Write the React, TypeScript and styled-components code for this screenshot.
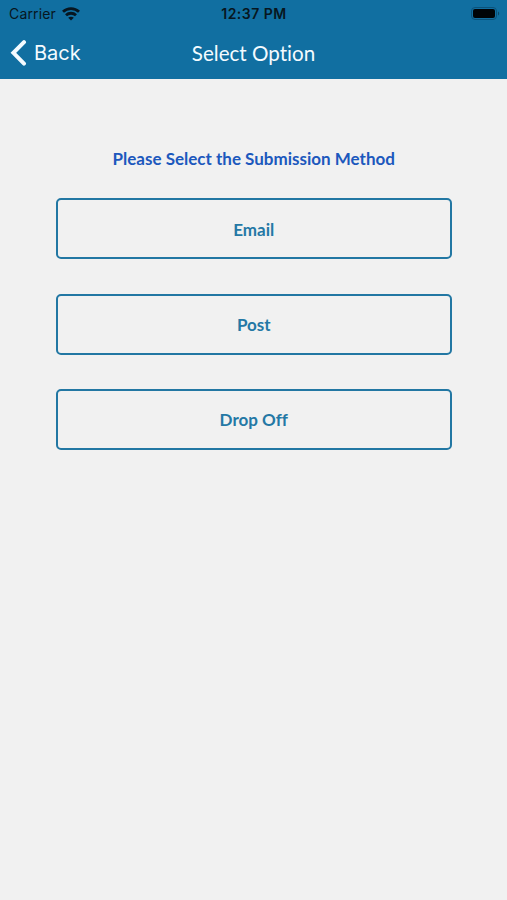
import React from "react"
import styled, { createGlobalStyle } from "styled-components"

const GlobalStyle = createGlobalStyle`
    * {
        box-sizing: border-box;
    }
    body {
        margin: 0;
        background: #f1f1f1;
    }
    button {
        border: none;
        background: none;
        padding: 0;
        cursor: pointer;
    }
`

const Screen = styled.div`
    min-height: 100vh;
    background: #f1f1f1;
    font-family: Lato, sans-serif;
    font-variant-ligatures: none;
`

const Header = styled.header`
    height: 79px;
    background: #116fa1;
`

const StatusBar = styled.div`
    height: 27px;
    display: grid;
    grid-template-columns: 1fr auto 1fr;
    align-items: center;
    padding: 0 7px 0 9px;
    font-family: Inter, sans-serif;
    font-size: 14px;
    line-height: 27px;
    color: #071620;
    .carrier {
        display: flex;
        align-items: center;
        gap: 6px;
        letter-spacing: 0.15px;
    }
    .time {
        margin-right: 1px;
        font-weight: 600;
        letter-spacing: 0.5px;
    }
    .battery {
        display: flex;
        justify-content: flex-end;
    }
    svg {
        display: block;
    }
`

const NavBar = styled.nav`
    height: 52px;
    display: grid;
    grid-template-columns: 1fr auto 1fr;
    align-items: center;
    padding: 0 10px;
    color: #f4fbff;
`

const BackButton = styled.button`
    display: flex;
    align-items: center;
    gap: 7px;
    justify-self: start;
    font-family: Inter, sans-serif;
    font-size: 20px;
    line-height: 52px;
    color: inherit;
`

const Title = styled.h1`
    margin: 0;
    font-size: 20.6px;
    font-weight: 400;
    line-height: 52px;
`

const Content = styled.main`
    padding: 69px 55.5px 0 56px;
`

const Prompt = styled.h2`
    margin: 0 0 28.4px;
    font-size: 17px;
    font-weight: 700;
    line-height: 22px;
    text-align: center;
    color: #1c58bd;
`

const OptionList = styled.div`
    display: flex;
    flex-direction: column;
    gap: 34.2px;
`

const OptionButton = styled.button`
    && {
        height: 61px;
        padding-top: 1px;
        border: 2px solid #2277a3;
        border-radius: 5px;
        font-family: Lato, sans-serif;
        font-size: 17px;
        font-weight: 700;
        font-variant-ligatures: none;
        color: #2478a5;
    }
`

const WifiIcon = () => (
    <svg width="18" height="14" viewBox="0 0 18 14" fill="none" stroke="currentColor" strokeWidth="2.8">
        <path d="M1 4.8C5.4.6 12.6.6 17 4.8" />
        <path d="M4 8.2c2.8-2.6 7.2-2.6 10 0" />
        <path d="M9 13.6L6.2 10.8c1.5-1.3 4.1-1.3 5.6 0z" fill="currentColor" stroke="none" />
    </svg>
)

const BatteryIcon = () => (
    <svg width="29" height="13" viewBox="0 0 29 13">
        <rect x="0.5" y="0.5" width="25" height="12" rx="3.5" fill="none" stroke="#0b527a" />
        <rect x="2" y="2" width="22" height="9" rx="2" fill="#000407" />
        <path d="M27 4.5c1.6.6 1.6 3.4 0 4z" fill="#0b4868" />
    </svg>
)

const BackIcon = () => (
    <svg width="17" height="26" viewBox="0 0 17 26" fill="none" stroke="currentColor" strokeWidth="4">
        <path d="M14 2.2L3.4 12.8l10.6 10.8" strokeLinecap="round" strokeLinejoin="miter" />
    </svg>
)

const options = ["Email", "Post", "Drop Off"]

const App: React.FC = () => {
    return (
        <Screen>
            <GlobalStyle />
            <Header>
                <StatusBar>
                    <div className="carrier">
                        <span>Carrier</span>
                        <WifiIcon />
                    </div>
                    <div className="time">12:37 PM</div>
                    <div className="battery">
                        <BatteryIcon />
                    </div>
                </StatusBar>
                <NavBar>
                    <BackButton>
                        <BackIcon />
                        Back
                    </BackButton>
                    <Title>Select Option</Title>
                </NavBar>
            </Header>
            <Content>
                <Prompt>Please Select the Submission Method</Prompt>
                <OptionList>
                    {options.map((option) => (
                        <OptionButton key={option}>{option}</OptionButton>
                    ))}
                </OptionList>
            </Content>
        </Screen>
    )
}

export default App
